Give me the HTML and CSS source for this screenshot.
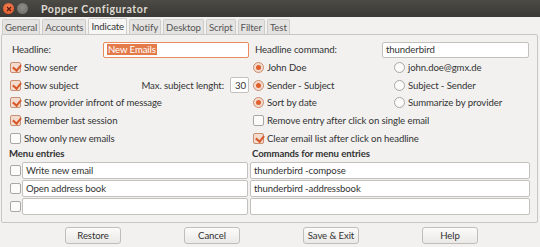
FILE: index.html
```html
<!DOCTYPE html>
<html>
<head>
<meta charset="utf-8">
<link rel="stylesheet" href="styles.css">
</head>
<body>
<div class="window">
  <div class="titlebar">
    <span class="wbtn close"><svg width="8" height="8" viewBox="0 0 8 8"><path d="M2 2L6 6M6 2L2 6" stroke="#5a1a0a" stroke-width="1.3"/></svg></span>
    <span class="wbtn min"></span>
    <span class="title">Popper Configurator</span>
  </div>
  <div class="tabs">
    <span class="tab">General</span>
    <span class="tab">Accounts</span>
    <span class="tab active">Indicate</span>
    <span class="tab">Notify</span>
    <span class="tab">Desktop</span>
    <span class="tab">Script</span>
    <span class="tab">Filter</span>
    <span class="tab">Test</span>
  </div>
  <div class="panel">
    <div class="toprow">
      <div class="half hl">
        <span class="lbl">Headline:</span>
        <span class="input focus hlin"><span class="sel">New Emails</span></span>
      </div>
      <div class="half hl">
        <span class="lbl">Headline command:</span>
        <span class="input cmdin">thunderbird</span>
      </div>
    </div>
    <div class="opts">
      <div class="col left">
        <div class="row"><span class="cb on"></span>Show sender</div>
        <div class="row"><span class="cb on"></span>Show subject<span class="spacer"></span><span class="maxl">Max. subject lenght:</span><span class="input num">30</span></div>
        <div class="row"><span class="cb on"></span>Show provider infront of message</div>
        <div class="row"><span class="cb on"></span>Remember last session</div>
        <div class="row"><span class="cb"></span>Show only new emails</div>
      </div>
      <div class="col right">
        <div class="row"><span class="rcell"><span class="rb on"></span>John Doe</span><span class="rcell"><span class="rb"></span>john.doe@gmx.de</span></div>
        <div class="row"><span class="rcell"><span class="rb on"></span>Sender - Subject</span><span class="rcell"><span class="rb"></span>Subject - Sender</span></div>
        <div class="row"><span class="rcell"><span class="rb on"></span>Sort by date</span><span class="rcell"><span class="rb"></span>Summarize by provider</span></div>
        <div class="row"><span class="cb"></span>Remove entry after click on single email</div>
        <div class="row"><span class="cb on"></span>Clear email list after click on headline</div>
      </div>
    </div>
    <div class="entries">
      <div class="ehead left">Menu entries</div>
      <div class="ehead">Commands for menu entries</div>
      <div class="erow"><span class="cb"></span><span class="input ein">Write new email</span></div>
      <span class="input cin">thunderbird -compose</span>
      <div class="erow"><span class="cb"></span><span class="input ein">Open address book</span></div>
      <span class="input cin">thunderbird -addressbook</span>
      <div class="erow"><span class="cb"></span><span class="input ein"></span></div>
      <span class="input cin"></span>
    </div>
  </div>
  <div class="buttons">
    <span class="btn">Restore</span>
    <span class="btn">Cancel</span>
    <span class="btn">Save &amp; Exit</span>
    <span class="btn">Help</span>
  </div>
</div>
</body>
</html>
```
FILE: styles.css
```css
* { box-sizing: border-box; }
html, body { margin: 0; padding: 0; }
body {
  width: 540px; height: 247px; overflow: hidden;
  background: #f2f1f0;
  font-family: Lato, "Noto Sans", sans-serif;
  font-size: 9.6px;
  letter-spacing: -0.1px;
  color: #333333;
}
.window { width: 540px; height: 247px; display: flex; flex-direction: column; }
.titlebar {
  height: 17px; flex: none;
  background: linear-gradient(#4b4a45, #3a3935);
  display: flex; align-items: center; padding-left: 3px; gap: 3px;
}
.wbtn { width: 11px; height: 11px; border-radius: 50%; display: flex; align-items: center; justify-content: center; }
.close { background: radial-gradient(circle at 50% 40%, #f58458, #dd4f1f); }
.min { background: radial-gradient(circle at 50% 40%, #8e8d88, #6a6964); }
.title { color: #dfdbd2; font-weight: bold; font-size: 10.5px; margin-left: 10px; letter-spacing: 0.6px; }
.tabs { height: 16px; flex: none; display: flex; padding-left: 2px; gap: 2px; align-items: flex-end; margin-top: 1px; }
.tab {
  height: 15px; padding: 0 2px; display: flex; align-items: center;
  background: #e4e3e1; border: 1px solid #cfcdca; border-bottom: none;
  border-radius: 2px 2px 0 0; color: #555555;
}
.tab.active { background: #f6f6f5; height: 16px; color: #333333; }
.panel {
  margin: 0 2px 0 1px; height: 189px; flex: none;
  border: 1px solid #c9c7c4; border-radius: 2px;
  background: #f2f1f0;
  padding: 6px 8px 0 8px;
}
.toprow { display: grid; grid-template-columns: 239px 1fr; gap: 4px; }
.half { display: flex; align-items: center; height: 17px; }
.lbl { margin-left: 2px; }
.input {
  height: 16px; background: #fff; border: 1px solid #c3c1be; border-radius: 2px;
  display: flex; align-items: center; padding: 0 3px; color: #333333;
}
.hlin { margin-left: auto; width: 146px; }
.focus { border-color: #e98b5d; }
.sel { background: #e47a4a; color: #fff; padding: 0 1px; }
.cmdin { margin-left: auto; width: 147px; }
.opts { display: grid; grid-template-columns: 239px 1fr; gap: 4px; margin-top: 1px; }
.col { display: flex; flex-direction: column; }
.row { height: 17.6px; display: flex; align-items: center; }
.cb {
  width: 11px; height: 11px; border: 1px solid #a9a7a4; border-radius: 2px; background: #fbfbfa;
  margin-right: 3px; flex: none; position: relative;
}
.cb.on { background: #f3dccf; border-color: #c98d6f; }
.cb.on::after {
  content: ""; position: absolute; left: 2.5px; top: 0px; width: 4px; height: 6px;
  border: solid #d8582a; border-width: 0 2px 2px 0; transform: rotate(40deg);
}
.spacer { flex: 1; }
.maxl { margin-right: 6px; }
.num { width: 19px; justify-content: flex-end; padding: 0 2px; }
.rcell { display: flex; align-items: center; width: 141px; }
.rb {
  width: 11px; height: 11px; border-radius: 50%; border: 1px solid #a9a7a4; background: #fbfbfa;
  margin-right: 3px; flex: none; display: flex; align-items: center; justify-content: center;
}
.rb.on { border-color: #c98d6f; background: #f3dccf; }
.rb.on::after { content: ""; width: 5px; height: 5px; border-radius: 50%; background: #df5f2d; }
.entries {
  display: grid; grid-template-columns: 239px 1fr; column-gap: 2px; row-gap: 1px;
  margin-top: 0px; margin-left: -1px; margin-right: -1px;
}
.ehead { font-weight: bold; height: 14px; display: flex; align-items: center; margin-left: 2px; }
.ehead.left { margin-left: 0; }
.erow { display: flex; align-items: center; padding-left: 1px; }
.erow .cb { margin-right: 1px; }
.ein { flex: 1; height: 17px; }
.cin { height: 17px; }
.buttons { display: flex; padding-left: 65px; gap: 63px; margin-top: 4px; }
.btn {
  width: 56px; height: 17px; border: 1px solid #c0beba; border-radius: 3px;
  background: linear-gradient(#fbfbfa, #eae9e7); display: flex; align-items: center; justify-content: center;
  color: #333333;
}
```
